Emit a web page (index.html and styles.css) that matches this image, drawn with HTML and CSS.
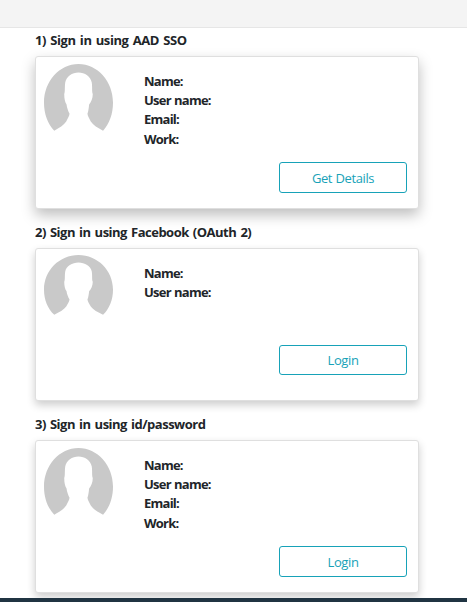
FILE: index.html
```
<!DOCTYPE html>
<html lang="en">
<head>
<meta charset="utf-8">
<title>Sign in</title>
<link rel="stylesheet" href="styles.css">
</head>
<body>
<svg class="defs" width="0" height="0" aria-hidden="true">
  <symbol id="avatar" viewBox="40 42 208 199" preserveAspectRatio="none">
    <path fill="#c9c9c9" d="M71 240 C51 220 40 190 40 157 C40 93 87 42 144 42 C201 42 248 93 248 157 C248 190 237 220 218 240 C202 232 188 224 181 213 C177 205 172 198 171 190 C174 181 175 172 176 162 C182 156 187 144 187 131 C184 125 186 110 184 97 C181 79 163 67 144 67 C125 67 107 79 104 97 C102 110 104 125 101 131 C101 144 103 156 108 162 C109 172 113 181 117 190 C116 198 111 205 107 213 C100 224 86 232 71 240 Z"/>
  </symbol>
</svg>
<header class="topbar"></header>
<main class="content">
  <section class="signin">
    <h2 class="title title-sso">1) Sign in using AAD SSO</h2>
    <div class="card card-raised">
      <svg class="avatar"><use href="#avatar"/></svg>
      <div class="details">
        <div class="fields"><span>Name:</span><span>User name:</span><span>Email:</span><span>Work:</span></div>
        <button class="btn">Get Details</button>
      </div>
    </div>
  </section>
  <section class="signin">
    <h2 class="title">2) Sign in using Facebook (OAuth 2)</h2>
    <div class="card card-short">
      <svg class="avatar avatar-short"><use href="#avatar"/></svg>
      <div class="details">
        <div class="fields"><span>Name:</span><span>User name:</span></div>
        <button class="btn btn-short">Login</button>
      </div>
    </div>
  </section>
  <section class="signin">
    <h2 class="title">3) Sign in using id/password</h2>
    <div class="card">
      <svg class="avatar"><use href="#avatar"/></svg>
      <div class="details">
        <div class="fields"><span>Name:</span><span>User name:</span><span>Email:</span><span>Work:</span></div>
        <button class="btn">Login</button>
      </div>
    </div>
  </section>
</main>
<footer class="footer"></footer>
</body>
</html>
```
FILE: styles.css
```
* { box-sizing: border-box; }
body {
  margin: 0;
  height: 602px;
  overflow: hidden;
  display: flex;
  flex-direction: column;
  background: #fff;
  color: #212529;
  font-family: "Open Sans", "Noto Sans", sans-serif;
  font-size: 13px;
}
.defs { position: absolute; }
.topbar {
  flex: none;
  height: 28px;
  background: #f4f4f4;
  border-bottom: 1px solid #e6e6e6;
}
.content {
  flex: none;
  height: 570px;
  padding-left: 35px;
  overflow: hidden;
}
.signin { height: 192px; }
.title {
  margin: 0;
  height: 28px;
  padding-top: 3px;
  font-size: 13px;
  font-weight: 700;
  line-height: 19px;
  white-space: nowrap;
  letter-spacing: -0.5px;
  word-spacing: 1.2px;
}
.title-sso { letter-spacing: -0.4px; }
.card {
  width: 384px;
  height: 153px;
  display: flex;
  padding: 7px 11px 15px 8px;
  border: 1px solid #dfdfdf;
  border-radius: 3px;
  background: #fff;
  box-shadow: 0 4px 8px rgba(0, 0, 0, 0.2);
}
.card-raised { box-shadow: 0 6px 14px rgba(0, 0, 0, 0.26); }
.card-short { padding-top: 6px; padding-bottom: 25px; }
.avatar { flex: none; width: 69px; height: 67px; }
.avatar-short { height: 60px; }
.details {
  flex: 1;
  display: flex;
  flex-direction: column;
  justify-content: space-between;
  padding-left: 31px;
}
.fields {
  display: flex;
  flex-direction: column;
  padding-top: 8px;
  font-weight: 700;
  line-height: 19.2px;
  letter-spacing: -0.75px;
  word-spacing: 0.5px;
}
.card-short .fields { padding-top: 9px; }
.btn {
  align-self: flex-end;
  width: 128px;
  height: 31px;
  padding: 1px 0 0;
  border: 1px solid #17a2b8;
  border-radius: 3px;
  background: #fff;
  color: #17a2b8;
  font: 400 13px/18px "Open Sans", "Noto Sans", sans-serif;
  letter-spacing: -0.4px;
  word-spacing: 0.5px;
}
.btn-short { height: 30px; padding: 0 0 1px; }
.footer { flex: none; height: 4px; background: #203442; }
```
